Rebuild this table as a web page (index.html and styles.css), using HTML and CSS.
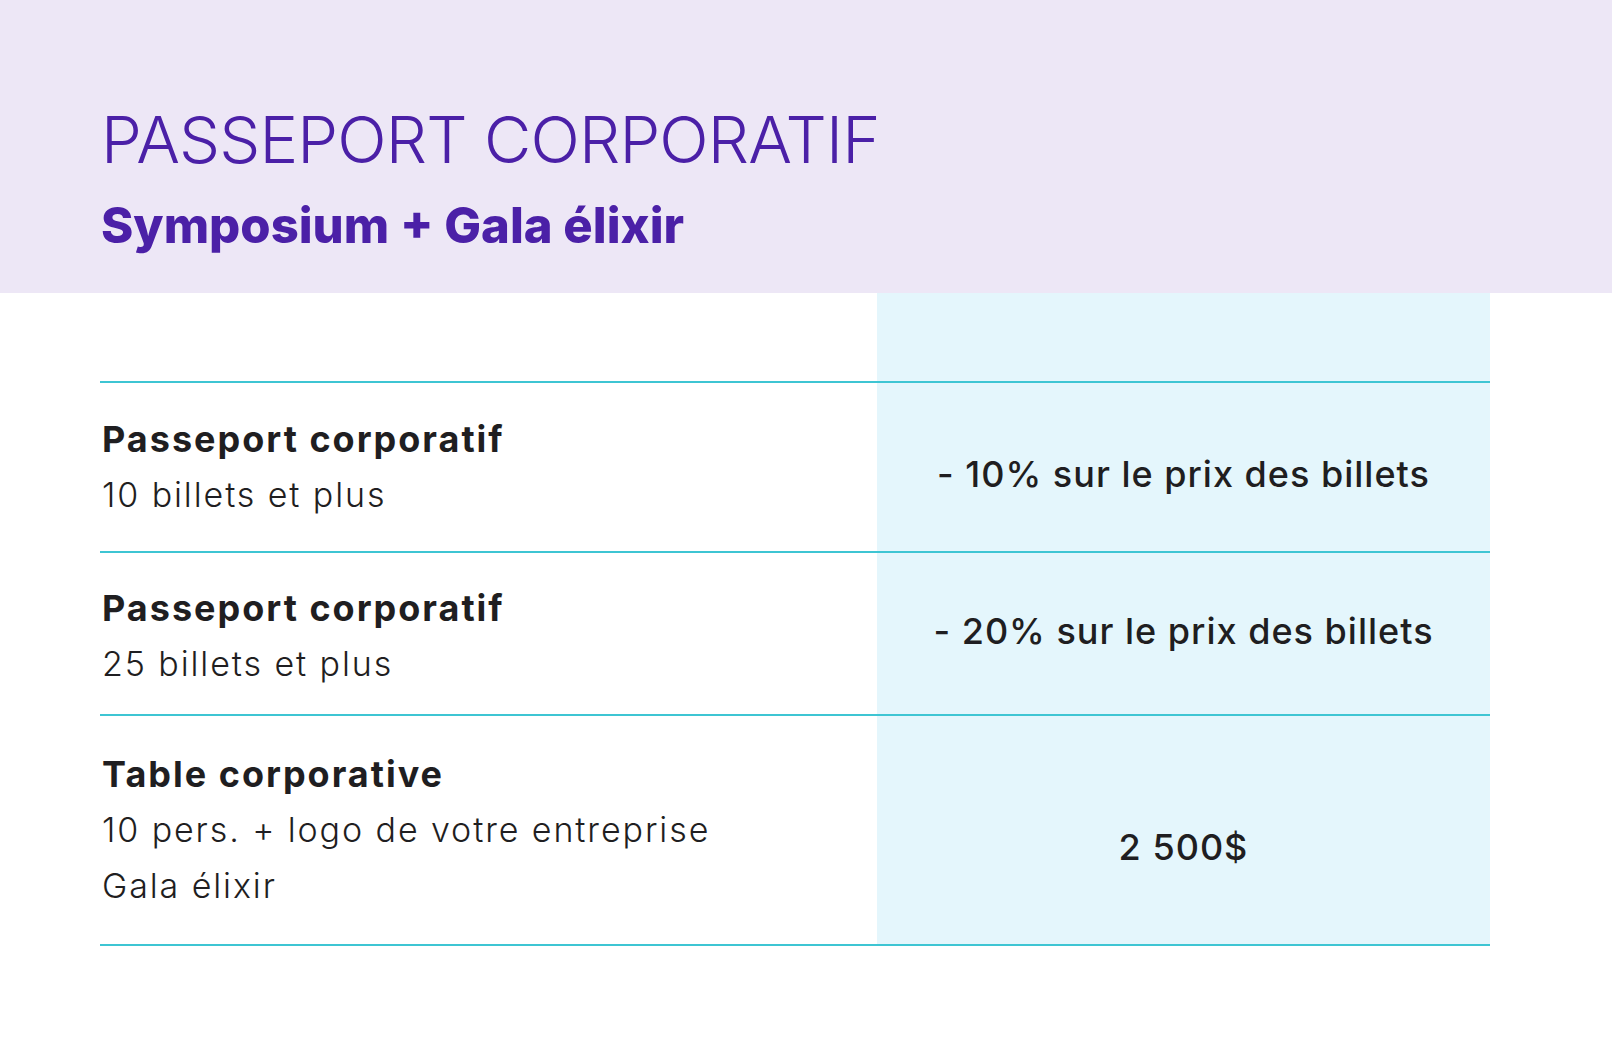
FILE: index.html
```html
<!DOCTYPE html>
<html lang="fr">
<head>
<meta charset="utf-8">
<title>Passeport corporatif</title>
<link rel="stylesheet" href="styles.css">
</head>
<body>
<header class="hero">
  <h1 class="hero-title">PASSEPORT CORPORATIF</h1>
  <h2 class="hero-sub">Symposium + Gala élixir</h2>
</header>
<main class="pricing">
  <div class="row row-head">
    <div class="cell-left"></div>
    <div class="cell-right"></div>
  </div>
  <div class="row row-1">
    <div class="cell-left">
      <p class="item-name">Passeport corporatif</p>
      <p class="item-desc">10 billets et plus</p>
    </div>
    <div class="cell-right"><span class="price">- 10% sur le prix des billets</span></div>
  </div>
  <div class="row row-2">
    <div class="cell-left">
      <p class="item-name">Passeport corporatif</p>
      <p class="item-desc">25 billets et plus</p>
    </div>
    <div class="cell-right"><span class="price">- 20% sur le prix des billets</span></div>
  </div>
  <div class="row row-3">
    <div class="cell-left">
      <p class="item-name">Table corporative</p>
      <p class="item-desc">10 pers. + logo de votre entreprise</p>
      <p class="item-desc">Gala élixir</p>
    </div>
    <div class="cell-right"><span class="price">2 500$</span></div>
  </div>
</main>
</body>
</html>
```
FILE: styles.css
```css
html, body {
  margin: 0;
  padding: 0;
  background: #ffffff;
}
body {
  font-family: "Inter", "Liberation Sans", sans-serif;
  color: #1f1e21;
}
.hero {
  background: #ede7f6;
  height: 293px;
  box-sizing: border-box;
  padding: 107px 0 0 101px;
}
.hero-title {
  margin: 0;
  font-size: 65px;
  line-height: 65px;
  font-weight: 300;
  letter-spacing: -0.85px;
  color: #4b20a7;
}
.hero-sub {
  margin: 29px 0 0 0;
  font-size: 49px;
  line-height: 50px;
  font-weight: 800;
  letter-spacing: 0;
  color: #4b20a7;
}
.pricing {
  margin-left: 100px;
  width: 1390px;
}
.row {
  display: grid;
  grid-template-columns: 777px 1fr;
  border-bottom: 2px solid #3ec5d3;
}
.row-head { height: 88px; }
.cell-left {
  box-sizing: border-box;
  padding-left: 2px;
}
.cell-right {
  box-sizing: border-box;
  background: #e4f6fc;
  display: flex;
  align-items: center;
  justify-content: center;
}
.row-1 .cell-left { padding-top: 28px; padding-bottom: 28px; }
.row-2 .cell-left { padding-top: 27px; padding-bottom: 22px; }
.row-3 .cell-left { padding-top: 30px; padding-bottom: 30px; }
.row-1 .cell-right { padding-top: 14px; }
.row-2 .cell-right { padding-bottom: 6px; }
.row-3 .cell-right { padding-top: 33px; }
.item-name {
  margin: 0;
  font-size: 36px;
  line-height: 56px;
  font-weight: 700;
  letter-spacing: 2px;
}
.item-desc {
  margin: 0;
  font-size: 34px;
  line-height: 56px;
  font-weight: 300;
  letter-spacing: 1.9px;
}
.price {
  font-size: 36px;
  font-weight: 500;
  letter-spacing: 1px;
}
```
